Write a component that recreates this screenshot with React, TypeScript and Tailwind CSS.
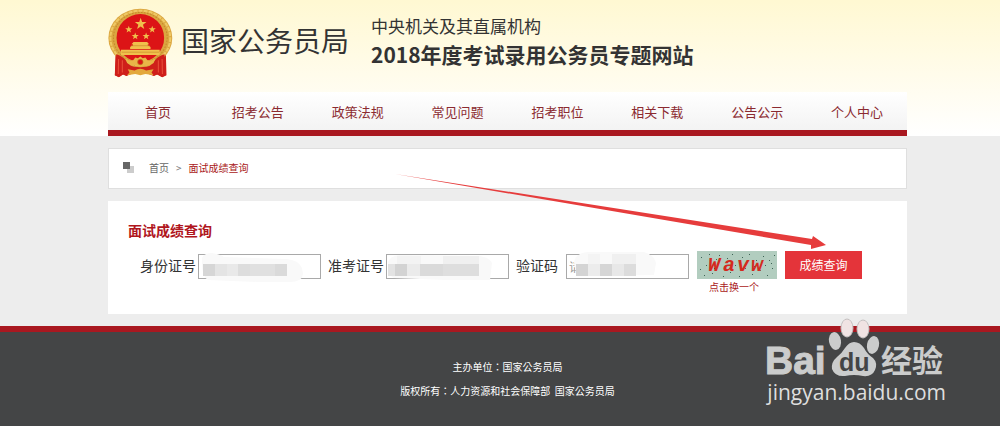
import type { FormEvent } from "react";

const NAV = ["首页", "招考公告", "政策法规", "常见问题", "招考职位", "相关下载", "公告公示", "个人中心"];

type Cell = { x: number; y: number; w: number; fill: string };

type Field = {
  id: string;
  label: string;
  labelClass: string;
  placeholder?: string;
  smudge: string;
  cells: Cell[];
};

const FIELDS: Field[] = [
  {
    id: "idcard",
    label: "身份证号",
    labelClass: "mr-0.5",
    smudge: "M4 4Q6 -1 14 -1Q22 0 26 3L88 5Q101 6 104 14L105 20Q104 28 92 28L60 28L10 26Q3 22 4 4Z",
    cells: [
      { x: 5, y: 10, w: 12, fill: "#d6d6d6" },
      { x: 17, y: 10, w: 12, fill: "#e4e4e4" },
      { x: 29, y: 10, w: 11, fill: "#e9e9e9" },
      { x: 40, y: 10, w: 12, fill: "#dddddd" },
      { x: 52, y: 10, w: 25, fill: "#e0e0e0" },
      { x: 77, y: 10, w: 12, fill: "#dadada" },
    ],
  },
  {
    id: "ticket",
    label: "准考证号",
    labelClass: "mr-0.5",
    smudge: "M2 8Q4 2 14 1L94 2Q104 4 106 9L104 26L60 26L8 24Q2 22 2 8Z",
    cells: [
      { x: 11, y: 2, w: 24, fill: "#f3f3f3" },
      { x: 57, y: 2, w: 36, fill: "#f0f0f0" },
      { x: 2, y: 10, w: 7, fill: "#e3e3e3" },
      { x: 9, y: 10, w: 12, fill: "#d3d3d3" },
      { x: 21, y: 10, w: 13, fill: "#ebebeb" },
      { x: 34, y: 10, w: 23, fill: "#dadada" },
      { x: 57, y: 10, w: 36, fill: "#dedede" },
    ],
  },
  {
    id: "code",
    label: "验证码",
    labelClass: "mr-2",
    placeholder: "请输入验证码",
    smudge: "M8 8Q10 -1 22 -2L78 -2Q88 1 90 9L88 21L16 22Q8 20 8 8Z",
    cells: [
      { x: 22, y: 0, w: 12, fill: "#f4f4f4" },
      { x: 46, y: 0, w: 24, fill: "#f0f0f0" },
      { x: 10, y: 10, w: 12, fill: "#d4d4d4" },
      { x: 22, y: 10, w: 12, fill: "#ececec" },
      { x: 34, y: 10, w: 12, fill: "#d6d6d6" },
      { x: 46, y: 10, w: 12, fill: "#e8e8e8" },
      { x: 58, y: 10, w: 12, fill: "#dcdcdc" },
    ],
  },
];

const DOTS = [
  [4, 6], [9, 14], [12, 3], [15, 22], [7, 24], [19, 8], [22, 4], [26, 25], [30, 7], [35, 3], [33, 21],
  [38, 14], [42, 25], [45, 6], [48, 17], [52, 3], [55, 23], [59, 9], [63, 19], [66, 5], [70, 24], [72, 9],
  [75, 17], [77, 4], [68, 14], [28, 15], [3, 18], [74, 12], [57, 15], [17, 17],
];

const CAPTCHA_LETTERS = [
  { ch: "W", x: 11 },
  { ch: "a", x: 26 },
  { ch: "v", x: 40 },
  { ch: "w", x: 54 },
];

function star(cx: number, cy: number, r: number) {
  return Array.from({ length: 10 }, (_, i) => {
    const a = (Math.PI / 5) * i - Math.PI / 2;
    const d = i % 2 ? r * 0.4 : r;
    return `${(cx + d * Math.cos(a)).toFixed(1)},${(cy + d * Math.sin(a)).toFixed(1)}`;
  }).join(" ");
}

function Emblem() {
  return (
    <svg viewBox="24 10 191 206" className="h-[70px] w-[65px] shrink-0" aria-hidden>
      <path d="M46 140L194 140L196 208L184 214L168 206L158 210L140 203H96L78 210L68 206L56 214L44 208Z" fill="#cf1f1a" />
      <ellipse cx="119" cy="98" rx="94" ry="86" fill="#dba640" />
      <ellipse cx="119" cy="98" rx="88" ry="80" fill="none" stroke="#efc964" strokeWidth="6" strokeDasharray="12 3" />
      <ellipse cx="119" cy="97" rx="79" ry="74" fill="none" stroke="#c58a2c" strokeWidth="3" strokeDasharray="5 4" />
      <circle cx="119" cy="98" r="70" fill="#dc1416" />
      <g fill="#f0c04c">
        <polygon points={star(120, 57, 18)} />
        <polygon points={star(85, 73, 11)} />
        <polygon points={star(154, 73, 11)} />
        <polygon points={star(104, 93, 11)} />
        <polygon points={star(136, 93, 11)} />
        <path d="M93 117L99 110H139L145 117ZM97 117H141V125H97ZM89 125L93 122H145L149 125V131H89ZM62 133H176V148H62Z" />
      </g>
      <path d="M64 140H174M92 121H146" stroke="#c98a2a" strokeWidth="2" />
      <path d="M48 146Q66 150 78 166L90 178L80 210L68 205L56 213L44 208ZM190 146Q172 150 160 166L148 178L158 210L170 205L182 213L194 208Z" fill="#cf1f1a" />
      <path d="M55 160L54 204M66 164L66 200M183 160L184 204M172 164L172 200" stroke="#e8503a" strokeWidth="3" />
      <path
        d="M75 158Q86 168 98 164L104 156L112 158L119 153L126 158L134 156L140 164Q152 168 164 158L158 172Q148 182 134 178Q119 188 104 178Q90 182 80 172Z"
        fill="#e9b548"
      />
      <circle cx="119" cy="169" r="8" fill="#dc1416" stroke="#b97a22" strokeWidth="2" />
      <path d="M82 190L102 194Q119 184 136 194L158 190L152 200L158 208L134 204L119 208L104 204L80 208L87 200Z" fill="#e3a83c" />
    </svg>
  );
}

function CaptchaPicture() {
  return (
    <svg viewBox="0 0 80 28" className="block h-7 w-20" aria-hidden>
      <rect width="80" height="28" fill="#b2cdbf" />
      {DOTS.map(([x, y]) => (
        <rect key={`${x}-${y}`} x={x} y={y} width="1" height="1" fill="#3d6355" />
      ))}
      <g fontFamily="Liberation Mono, monospace" fontStyle="italic" fontWeight="700" fontSize="20" fill="#d42a1e">
        {CAPTCHA_LETTERS.map((l) => (
          <text key={l.ch} x={l.x} y="20">
            {l.ch}
          </text>
        ))}
      </g>
    </svg>
  );
}

function QueryField({ field }: { field: Field }) {
  return (
    <div className="flex shrink-0">
      <label htmlFor={field.id} className={`leading-7 ${field.labelClass}`}>
        {field.label}
      </label>
      <div className="relative mt-[3px]">
        <input
          id={field.id}
          type="text"
          placeholder={field.placeholder}
          className="block h-[25px] w-[123px] border border-[#a9a9a9] bg-white px-0.5 text-xs outline-none placeholder:text-[#999]"
        />
        <svg viewBox="0 0 123 25" className="pointer-events-none absolute inset-0 h-full w-full overflow-visible" aria-hidden>
          <path d={field.smudge} fill="#f9f9f9" />
          {/* covers the rest of the hint behind the mosaic */}
          {field.cells.map((c) => (
            <rect key={`${c.x}-${c.y}`} x={c.x} y={c.y} width={c.w} height={c.y < 10 ? 10 - c.y : 12} fill={c.fill} />
          ))}
        </svg>
      </div>
    </div>
  );
}

function Watermark() {
  return (
    <div className="pointer-events-none absolute -top-3 right-[54px] text-[#dedede]">
      <svg viewBox="0 0 178 58" className="block h-[58px] w-[178px] overflow-visible" aria-hidden>
        <g fill="#cbcccc" fontWeight="700">
          <text x="-2" y="54" fontSize="39" fontFamily="Liberation Sans, sans-serif" stroke="#cbcccc">
            Bai
          </text>
          <text x="114" y="52" fontSize="31" fontFamily="Noto Sans CJK SC, sans-serif">
            经验
          </text>
          <ellipse cx="68" cy="21" rx="6" ry="9" transform="rotate(-10 68 21)" />
          <ellipse cx="106" cy="25" rx="6" ry="9" transform="rotate(12 106 25)" />
          <path d="M87 22Q93 22 97 28Q100 34 106 38Q111 43 108 50Q105 57 96 56Q87 54 78 56Q68 57 65 49Q64 42 70 37Q75 33 78 28Q82 22 87 22Z" />
        </g>
        <ellipse cx="80" cy="8" rx="6" ry="9" fill="#f0e3e3" stroke="#c4c0c0" />
        <ellipse cx="96" cy="9" rx="6" ry="9" fill="#f0e3e3" stroke="#c4c0c0" />
        <text x="72" y="51" fontSize="25" fontWeight="700" fontFamily="Liberation Sans, sans-serif" fill="#444546">
          du
        </text>
      </svg>
      <div className="font-['Open_Sans',sans-serif] text-[21px] leading-7">jingyan.baidu.com</div>
    </div>
  );
}

export default function App() {
  function submit(e: FormEvent) {
    e.preventDefault();
  }

  return (
    <div className="flex min-h-screen flex-col bg-[#ededed] font-['Noto_Sans_CJK_SC',sans-serif] text-[#333]">
      <header className="bg-linear-to-b from-[#fff8d2] to-white pr-[93px] pl-[108px]">
        <div className="flex h-[92px]">
          <div className="flex items-start pt-2">
            <Emblem />
            <span className="mt-3 ml-2 text-[28px] leading-10 whitespace-nowrap">国家公务员局</span>
          </div>
          <div className="ml-[22px] pt-3.5 whitespace-nowrap">
            <p className="text-[17px] leading-6">中央机关及其直属机构</p>
            <h1 className="text-[21px] leading-8 font-bold">2018年度考试录用公务员专题网站</h1>
          </div>
        </div>
        <nav className="flex h-11 border-b-6 border-[#a91820] bg-linear-to-b from-white to-[#f3f3f3]">
          {NAV.map((item) => (
            <a key={item} href="#" className="flex-1 text-center text-[13px] leading-10 text-[#8b2a30]">
              {item}
            </a>
          ))}
        </nav>
      </header>

      <main className="relative py-3 pr-[93px] pl-[108px]">
        <div className="mb-3 flex h-[41px] items-center border border-[#dfdfdf] bg-white pb-0.5 pl-3.5 text-[10px]">
          <svg viewBox="0 0 11 11" className="mr-[15px] h-[11px] w-[11px]" aria-hidden>
            <rect x="4" y="4" width="7" height="7" fill="#cccccc" />
            <rect width="7" height="7" fill="#666666" />
          </svg>
          <a href="#" className="text-[#666]">
            首页
          </a>
          <span className="mx-[7px] text-[#777]">&gt;</span>
          <span className="text-[#a91820]">面试成绩查询</span>
        </div>

        <section className="bg-white px-5 pt-[19px] pb-[19px]">
          <h2 className="mb-[11px] text-sm leading-5 font-bold text-[#b0161d]">面试成绩查询</h2>
          <form onSubmit={submit} className="flex items-start pl-3 text-sm">
            <div className="flex gap-[7px]">
              {FIELDS.map((f) => (
                <QueryField key={f.id} field={f} />
              ))}
            </div>
            <div className="ml-2 shrink-0">
              <CaptchaPicture />
              <button type="button" className="ml-3 block text-[10px] leading-4 text-[#a91820]">
                点击换一个
              </button>
            </div>
            <button type="submit" className="ml-2 h-7 w-[77px] shrink-0 bg-[#e4343a] text-xs text-white">
              成绩查询
            </button>
          </form>
        </section>

        {/* Arrow pointing at the submit button */}
        <svg viewBox="0 0 432 78" className="pointer-events-none absolute top-[37px] left-[394px] h-[78px] w-[432px]" aria-hidden>
          <path d="M1 1L418 66L419 63L432 72L417 76L417 72Z" fill="#e63c3c" />
        </svg>
      </main>

      <footer className="relative flex-1 border-t-6 border-[#a91820] bg-[#444546] py-[23px] pr-[93px] pl-[108px] text-center font-['Noto_Sans_CJK_TC',sans-serif] text-[10px] leading-6 text-white">
        <p>主办单位：国家公务员局</p>
        <p>版权所有：人力资源和社会保障部&nbsp; 国家公务员局</p>
        <Watermark />
      </footer>
    </div>
  );
}
